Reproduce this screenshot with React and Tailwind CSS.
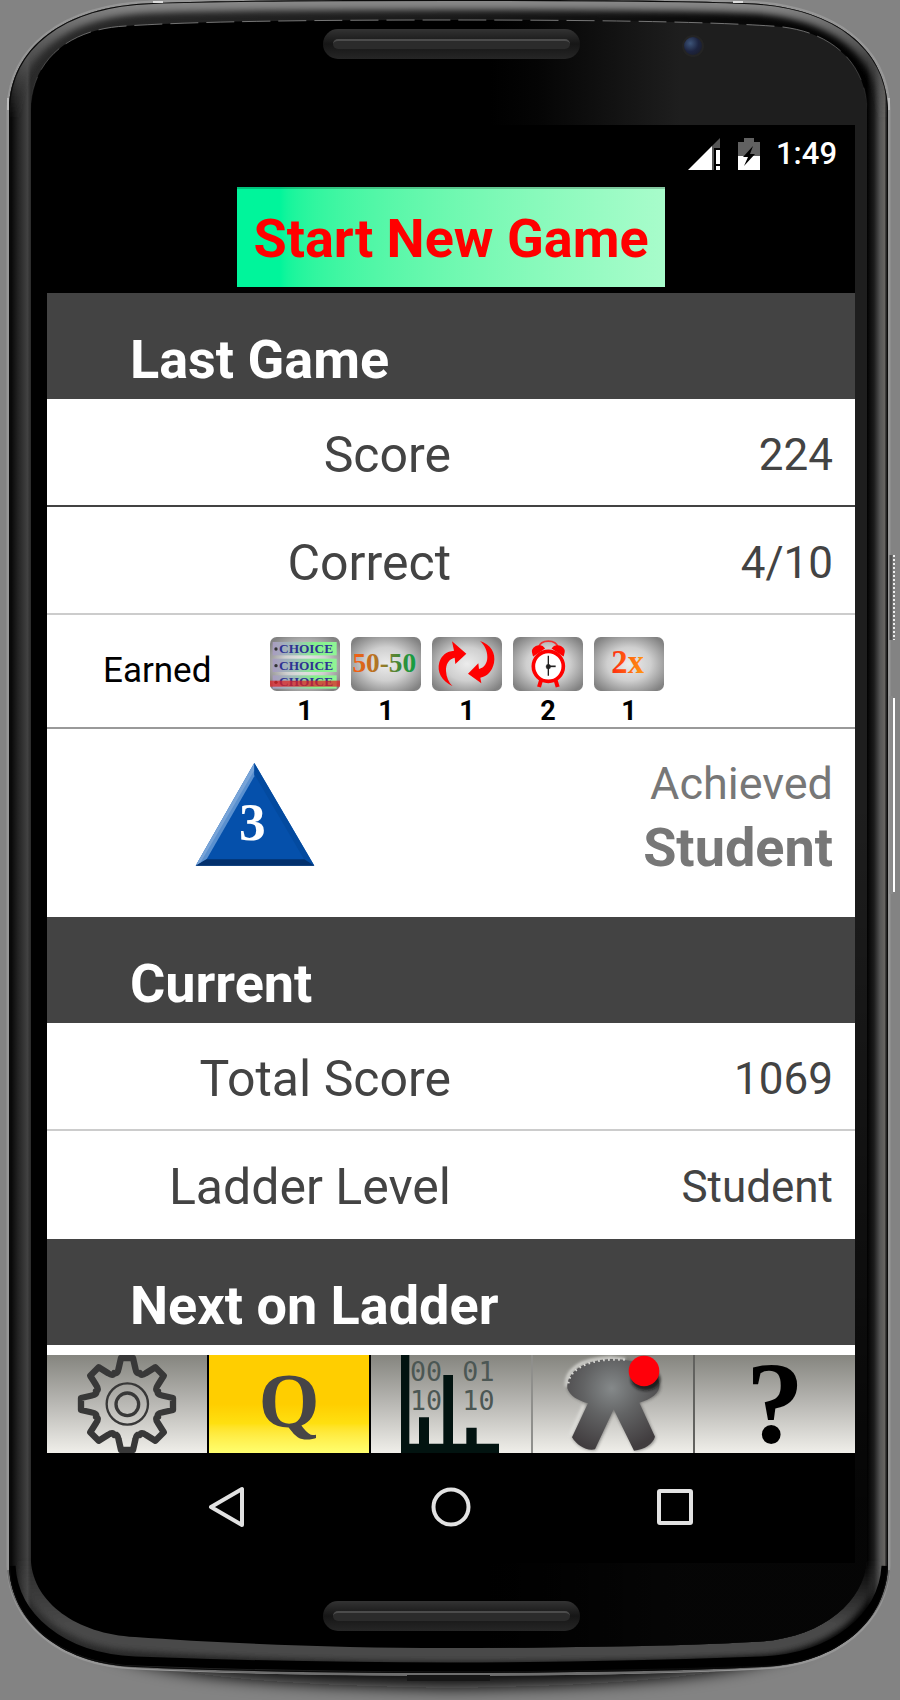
import React from "react";

const OUTER =
  "M9 108 C11 50 60 6 153 3 C230 0 330 0 448 0 C567 0 667 0 744 3 C837 6 886 50 888 108 V1566 C886 1620 840 1664 762 1667 C680 1671 560 1673 448 1673 C337 1673 217 1671 135 1667 C57 1664 11 1620 9 1566 Z";
const GLASS =
  "M31 104 C34 62 66 29 126 26 C200 21 330 20 448 20 C567 20 697 21 771 26 C831 29 863 62 867 104 V1562 C863 1602 822 1640 752 1642 C680 1646 560 1648 448 1648 C337 1648 217 1643 135 1637 C76 1634 34 1602 31 1562 Z";
const LOWER_RIM =
  "M11 1566 C14 1616 60 1658 135 1661 C217 1664 337 1667 448 1667 C560 1667 680 1664 762 1661 C836 1658 883 1616 886 1566";

function PhoneBody() {
  return (
    <svg
      className="absolute inset-0 h-full w-full"
      viewBox="0 0 900 1700"
      preserveAspectRatio="none"
      aria-hidden="true"
    >
      <defs>
        <linearGradient id="rim" gradientUnits="userSpaceOnUse" x1="9" y1="0" x2="888" y2="0">
          <stop offset="0" stopColor="#1c1c1c" />
          <stop offset="0.002" stopColor="#060606" />
          <stop offset="0.01" stopColor="#222" />
          <stop offset="0.021" stopColor="#424242" />
          <stop offset="0.025" stopColor="#2a2a2a" />
          <stop offset="0.5" stopColor="#1a1a1a" />
          <stop offset="0.976" stopColor="#000" />
          <stop offset="0.984" stopColor="#1c1c1c" />
          <stop offset="0.991" stopColor="#555" />
          <stop offset="0.996" stopColor="#666461" />
          <stop offset="0.998" stopColor="#242424" />
          <stop offset="1" stopColor="#242424" />
        </linearGradient>
        <linearGradient id="topFade" gradientUnits="userSpaceOnUse" x1="0" y1="0" x2="0" y2="120">
          <stop offset="0" stopColor="#8a8a8a" />
          <stop offset="0.4" stopColor="#5c5c5c" stopOpacity="0.9" />
          <stop offset="1" stopColor="#444" stopOpacity="0" />
        </linearGradient>
        <linearGradient id="bottomFade" gradientUnits="userSpaceOnUse" x1="0" y1="1560" x2="0" y2="1625">
          <stop offset="0" stopColor="#4a4a4a" stopOpacity="0" />
          <stop offset="1" stopColor="#4a4a4a" />
        </linearGradient>
        <linearGradient id="innerEdge" gradientUnits="userSpaceOnUse" x1="0" y1="20" x2="0" y2="110">
          <stop offset="0" stopColor="#777" />
          <stop offset="1" stopColor="#777" stopOpacity="0" />
        </linearGradient>
        <linearGradient id="sheen" gradientUnits="userSpaceOnUse" x1="490" y1="0" x2="680" y2="0">
          <stop offset="0" stopColor="#1e1e1e" stopOpacity="0" />
          <stop offset="0.25" stopColor="#1e1e1e" stopOpacity="0.15" />
          <stop offset="1" stopColor="#1e1e1e" />
        </linearGradient>
        <linearGradient id="sheenDim" gradientUnits="userSpaceOnUse" x1="0" y1="800" x2="0" y2="1500">
          <stop offset="0" stopColor="#000" stopOpacity="0" />
          <stop offset="1" stopColor="#000" stopOpacity="0.82" />
        </linearGradient>
        <filter id="soft" x="-5%" y="-5%" width="110%" height="110%">
          <feGaussianBlur stdDeviation="3" />
        </filter>
        <filter id="softer" x="-20%" y="-80%" width="140%" height="260%">
          <feGaussianBlur stdDeviation="8" />
        </filter>
        <clipPath id="body">
          <path d={OUTER} />
        </clipPath>
        <clipPath id="glass">
          <path d={GLASS} />
        </clipPath>
      </defs>

      <path
        d="M50 1610 C90 1668 200 1684 448 1688 C700 1684 810 1668 850 1610 Z"
        fill="#0c0c0c"
        filter="url(#softer)"
      />

      <path d={OUTER} fill="none" stroke="#969696" strokeWidth="5" />
      <path
        d="M9 1570 C14 1620 60 1662 135 1666 C217 1671 337 1674 448 1674 C560 1674 680 1671 762 1666 C836 1662 883 1620 888 1570"
        fill="none"
        stroke="#6e6e6e"
        strokeWidth="4"
      />
      <path d={OUTER} fill="url(#rim)" />
      <g clipPath="url(#body)">
        <path d={OUTER} fill="none" stroke="url(#topFade)" strokeWidth="20" filter="url(#soft)" />
        <path d={GLASS} fill="none" stroke="url(#bottomFade)" strokeWidth="28" filter="url(#soft)" />
        <path d={LOWER_RIM} fill="none" stroke="#000" strokeWidth="9" />
        <path d={OUTER} fill="none" stroke="#0a0a0a" strokeWidth="2" />
      </g>
      <path d={GLASS} fill="#000" />
      <g clipPath="url(#glass)">
        <rect x="490" y="20" width="380" height="1630" fill="url(#sheen)" />
        <rect x="490" y="800" width="380" height="850" fill="url(#sheenDim)" />
      </g>
      <path d={GLASS} fill="none" stroke="url(#innerEdge)" strokeWidth="1" strokeDasharray="28 8" />

      <path d="M153 2 h10 M733 2 h10" stroke="#ddd" strokeWidth="2" />
      <path d="M8 98 v12 M889 98 v12" stroke="#bbb" strokeWidth="2" />
      <rect x="407" y="1675" width="83" height="6" fill="#161616" />
      <g fill="none">
        <path d="M891 555 V640" stroke="#555" strokeWidth="3" />
        <path d="M894 555 V640" stroke="#eee" strokeWidth="2" strokeDasharray="2 2" />
        <path d="M891 696 V894" stroke="#8a8a8a" strokeWidth="3" />
        <path d="M894 698 V892" stroke="#fff" strokeWidth="2" />
      </g>
    </svg>
  );
}

function Speaker() {
  return (
    <div className="mx-auto h-[30px] w-[257px] rounded-full bg-linear-to-b from-[#333] via-[#161616] to-[#262626] p-[10px]">
      <div className="h-[10px] rounded-full border-t-2 border-[#4c4c4c] bg-[#2b2b2b]" />
    </div>
  );
}

function StatusBar() {
  return (
    <div className="flex h-[62px] items-center justify-end pr-[18px] pb-[4px] text-white">
      <svg className="h-[32px] w-[34px]" viewBox="0 0 34 32" aria-label="Signal">
        <path d="M24 8 L32 0 V10 H26 V32 H24 Z" fill="#555" />
        <path d="M0 32 L24 8 V32 Z" fill="#fff" />
        <path d="M28 12 h4 v14 h-4 z M28 28 h4 v4 h-4 z" fill="#fff" />
      </svg>
      <svg className="ml-4 h-[32px] w-[22px]" viewBox="0 0 22 32" aria-label="Battery charging">
        <path d="M0 4 H6 V0 H16 V4 H22 V18 H0 Z" fill="#616161" />
        <path d="M0 18 H22 V32 H0 Z" fill="#fff" />
        <path d="M15 8 L5 19 H10 L6 28 L17 16 H12 Z" fill="#000" />
      </svg>
      <time className="ml-4 text-[31px] leading-[32px] font-medium">1:49</time>
    </div>
  );
}

function SectionTitle({ children }) {
  return (
    <h2 className="bg-[#434343] pt-[37px] pr-4 pb-[9px] pl-[83px] text-[54px] leading-[60px] font-bold text-white">
      {children}
    </h2>
  );
}

function Row({ label, value, line = "border-[#ccc]" }) {
  return (
    <div className={"grid grid-cols-2 border-b-2 pt-[29px] pb-[23px] text-[#434343] " + line}>
      <dt className="text-right text-[50px] leading-[54px]">{label}</dt>
      <dd className="pr-[22px] text-right text-[44px] leading-[54px]">{value}</dd>
    </div>
  );
}

function Chip({ id, children }) {
  return (
    <svg className="h-[54px] w-[70px]" viewBox="0 0 210 162" aria-hidden="true">
      <defs>
        <radialGradient id={id + "-bg"} cx="0.5" cy="0.5" r="0.62">
          <stop offset="0" stopColor="#ececec" />
          <stop offset="0.5" stopColor="#cfcfcf" />
          <stop offset="1" stopColor="#828282" />
        </radialGradient>
      </defs>
      <rect width="210" height="162" rx="20" fill={"url(#" + id + "-bg)"} />
      {children}
    </svg>
  );
}

function ChoiceChip() {
  return (
    <Chip id="choice">
      <defs>
        <linearGradient id="choice-bar" x1="0" y1="0" x2="1" y2="0">
          <stop offset="0" stopColor="#a89cc0" />
          <stop offset="0.35" stopColor="#9fc0b8" />
          <stop offset="0.65" stopColor="#85f08c" />
          <stop offset="1" stopColor="#90f596" />
        </linearGradient>
      </defs>
      {[15, 65, 115].map((y) => (
        <g key={y}>
          <rect x="8" y={y} width="192" height="40" fill="url(#choice-bar)" />
          <circle cx="18" cy={y + 21} r="5" fill="#333" />
          <text x="27" y={y + 33} fontSize="40" fontWeight="700" fill="#2e3192" fontFamily="Liberation Serif, serif">
            CHOICE
          </text>
        </g>
      ))}
      <rect x="0" y="131" width="210" height="18" fill="#e02020" opacity="0.72" />
    </Chip>
  );
}

function FiftyChip() {
  return (
    <Chip id="fifty">
      <defs>
        <linearGradient id="fifty-ink" x1="0" y1="0" x2="1" y2="0">
          <stop offset="0" stopColor="#ff5a10" />
          <stop offset="0.45" stopColor="#a07a28" />
          <stop offset="0.75" stopColor="#3a8a38" />
          <stop offset="1" stopColor="#10a040" />
        </linearGradient>
      </defs>
      <text x="100" y="106" textAnchor="middle" fontSize="82" fontWeight="700" fill="url(#fifty-ink)" fontFamily="Liberation Serif, serif">
        50-50
      </text>
    </Chip>
  );
}

function SwapChip() {
  return (
    <Chip id="swap">
      <g fill="#f00">
        <path d="M62 148 C28 132 14 104 22 76 C29 54 44 43 66 41 L60 13 L103 50 L70 81 L68 62 C50 66 41 82 42 102 C43 121 50 136 62 148 Z" />
        <path d="M144 12 C176 22 192 48 186 78 C180 104 166 118 145 122 L148 139 L108 110 L139 79 L141 96 C157 92 166 78 166 60 C166 40 157 24 144 12 Z" />
      </g>
    </Chip>
  );
}

function ClockChip() {
  return (
    <Chip id="clock">
      <g stroke="#f00" fill="none">
        <path d="M76 32 C84 6 128 6 136 32" stroke="#f03030" strokeWidth="5" />
        <path d="M62 54 C52 30 82 20 92 34 Z M150 54 C160 30 130 20 120 34 Z" fill="#f00" strokeWidth="6" />
        <path d="M84 130 L78 150 M128 130 L134 150" strokeWidth="12" />
        <circle cx="106" cy="88" r="45" fill="#fff" strokeWidth="11" />
      </g>
      <g stroke="#222" fill="#222">
        <path d="M106 56 V116" strokeWidth="4" />
        <path d="M106 88 H128" strokeWidth="5" />
        <circle cx="106" cy="89" r="7" />
      </g>
    </Chip>
  );
}

function DoubleChip() {
  return (
    <Chip id="double">
      <defs>
        <linearGradient id="double-ink" x1="0" y1="0" x2="1" y2="0">
          <stop offset="0" stopColor="#ff2a10" />
          <stop offset="1" stopColor="#ff9a10" />
        </linearGradient>
      </defs>
      <text x="101" y="107" textAnchor="middle" fontSize="98" fontWeight="700" fill="url(#double-ink)" fontFamily="Liberation Serif, serif">
        2x
      </text>
    </Chip>
  );
}

const EARNED = [
  { name: "Choice", Icon: ChoiceChip, count: 1 },
  { name: "Fifty-fifty", Icon: FiftyChip, count: 1 },
  { name: "Swap", Icon: SwapChip, count: 1 },
  { name: "Extra time", Icon: ClockChip, count: 2 },
  { name: "Double", Icon: DoubleChip, count: 1 },
];

function EarnedRow() {
  return (
    <div className="flex border-b-2 border-[#999] pt-[22px] pb-[2px]">
      <h3 className="w-[223px] pl-[56px] text-[35px] leading-[68px] text-black">Earned</h3>
      <ul className="flex gap-[11px]">
        {EARNED.map(({ name, Icon, count }) => (
          <li key={name} className="flex flex-col items-center">
            <Icon />
            <span className="pt-[6px] text-[27px] leading-[28px] font-bold text-black">{count}</span>
          </li>
        ))}
      </ul>
    </div>
  );
}

function RankBadge() {
  return (
    <svg className="h-[104px] w-[120px]" viewBox="0 0 360 312" role="img" aria-label="Level 3">
      <path d="M178 0 L358 308 H2 Z" fill="#0550ab" />
      <path d="M178 0 L2 308 L34 290 L178 40 Z" fill="#5a90cf" />
      <path d="M178 0 L2 308 L16 299 L178 22 Z" fill="#78a4d8" />
      <path d="M178 0 L358 308 L328 290 L178 34 Z" fill="#034a9f" />
      <path d="M2 308 L34 289 H328 L358 308 Z" fill="#03306d" />
      <text x="172" y="232" textAnchor="middle" fontSize="160" fontWeight="700" fill="#fff" fontFamily="Liberation Serif, serif">
        3
      </text>
    </svg>
  );
}

function AchievedRow() {
  return (
    <div className="flex items-start justify-between pt-[34px] pr-[22px] pb-[38px] pl-[148px] text-[#777]">
      <RankBadge />
      <p className="flex flex-col gap-[12px] pt-[1px] text-right">
        <span className="text-[45px] leading-[40px]">Achieved</span>
        <strong className="text-[54px] leading-[63px] font-bold">Student</strong>
      </p>
    </div>
  );
}

function gearPath() {
  const point = (x, y, turn) => {
    const a = (turn * Math.PI) / 4;
    const px = 261 + 3 * (x * Math.cos(a) - y * Math.sin(a));
    const py = 192 + 3 * (x * Math.sin(a) + y * Math.cos(a));
    return px.toFixed(1) + " " + py.toFixed(1);
  };
  let d = "";
  for (let i = 0; i < 8; i++) {
    d += (i === 0 ? "M" : "L") + point(-6, -46, i);
    d += " L" + point(6, -46, i);
    d += " L" + point(8.5, -35, i);
    d += " Q" + point(9.5, -29.5, i) + " " + point(12.8, -31, i);
    d += " Q" + point(-9.5, -29.5, i + 1) + " " + point(-8.5, -35, i + 1);
  }
  return d + " Z";
}

function GearIcon() {
  return (
    <svg className="h-[98px] w-full" viewBox="21 45 480 294" aria-hidden="true">
      <g fill="none" stroke="#383838">
        <path d={gearPath()} strokeWidth="19" strokeLinejoin="round" />
        <circle cx="262" cy="192" r="62" strokeWidth="7" />
        <circle cx="262" cy="193" r="34" strokeWidth="10" />
      </g>
    </svg>
  );
}

function LetterIcon({ letter, size, y, color }) {
  return (
    <svg className="h-[98px] w-full overflow-visible" viewBox="0 0 160 98" aria-hidden="true">
      <text x="80" y={y} textAnchor="middle" fontSize={size} fontWeight="700" fill={color} fontFamily="Liberation Serif, serif">
        {letter}
      </text>
    </svg>
  );
}

function StatsIcon() {
  return (
    <svg className="h-[98px] w-full" viewBox="-27 45 480 294" aria-hidden="true">
      <g fill="#4c5754" fontSize="80" fontFamily="DejaVu Sans Mono, monospace">
        <text x="90" y="122">00</text>
        <text x="247" y="122">01</text>
        <text x="90" y="210">10</text>
        <text x="247" y="210">10</text>
      </g>
      <path d="M63 45 H88 V311 H117 V232 H147 V311 H190 V105 H219 V311 H259 V263 H290 V311 H357 V339 H63 Z" fill="#021310" />
    </svg>
  );
}

function BeltIcon() {
  return (
    <svg className="h-[98px] w-full" viewBox="459 45 480 294" aria-hidden="true">
      <defs>
        <radialGradient id="belt-cloth" gradientUnits="userSpaceOnUse" cx="695" cy="145" r="190">
          <stop offset="0" stopColor="#85898a" />
          <stop offset="0.45" stopColor="#626364" />
          <stop offset="1" stopColor="#413d3f" />
        </radialGradient>
        <filter id="belt-soft" x="-10%" y="-10%" width="120%" height="120%">
          <feGaussianBlur stdDeviation="5" />
        </filter>
      </defs>
      <path
        d="M562 145 C560 95 610 62 690 57 C770 55 838 90 842 140 C842 164 812 180 780 188 L827 292 C825 315 795 330 766 334 L702 212 L648 330 C622 336 590 318 576 292 L622 190 C594 182 570 168 562 145 Z"
        fill="#222"
        opacity="0.45"
        filter="url(#belt-soft)"
      />
      <path d="M560 140 C556 90 600 58 690 54 L735 58 M612 196 L572 288" fill="none" stroke="#e4e4e0" strokeWidth="10" opacity="0.85" filter="url(#belt-soft)" />
      <path
        d="M562 145 C560 95 610 62 690 57 C770 55 838 90 838 135 C840 160 812 178 778 188 L825 290 C818 312 795 328 762 332 L701 208 L645 328 C620 334 590 316 576 292 L624 190 C594 182 570 168 562 145 Z"
        fill="url(#belt-cloth)"
      />
      <path d="M565 130 C568 92 615 62 690 59 L735 59" fill="none" stroke="#d8d8d4" strokeWidth="7" strokeDasharray="5 10" />
      <ellipse cx="797" cy="118" rx="44" ry="34" fill="#111" opacity="0.75" filter="url(#belt-soft)" />
      <circle cx="792" cy="93" r="46" fill="#ff000a" />
    </svg>
  );
}

const TABS = [
  { name: "Settings", icon: <GearIcon /> },
  { name: "Quiz", icon: <LetterIcon letter="Q" size={78} y={72} color="#474547" />, active: true },
  { name: "Statistics", icon: <StatsIcon /> },
  { name: "Ladder", icon: <BeltIcon /> },
  { name: "Help", icon: <LetterIcon letter="?" size={116} y={87} color="#000" /> },
];

const TAB_EDGES = ["bg-black", "bg-black", "bg-[#8f8f8c]", "bg-[#62625f]"];

function TabBar() {
  return (
    <nav className="mt-[10px] flex" aria-label="Sections">
      {TABS.map((tab, i) => (
        <React.Fragment key={tab.name}>
          <button
            type="button"
            aria-label={tab.name}
            aria-current={tab.active ? "page" : undefined}
            className={
              "min-w-0 flex-1 " +
              (tab.active
                ? "bg-linear-to-b from-[#ffce00] from-50% via-[#ffe010] via-70% to-[#ffff6e]"
                : "bg-linear-to-b from-[#85857f] via-[#b9b8b4] to-[#f0efea]")
            }
          >
            {tab.icon}
          </button>
          {i < TAB_EDGES.length && <span className={"w-[2px] " + TAB_EDGES[i]} />}
        </React.Fragment>
      ))}
    </nav>
  );
}

function SystemNav() {
  return (
    <nav className="flex h-[110px] items-center justify-center gap-[184px] bg-black pb-[2px]" aria-label="System">
      <button type="button" aria-label="Back">
        <svg className="h-[42px] w-[40px]" viewBox="0 0 40 42">
          <path d="M35 3 V39 L4 21 Z" fill="none" stroke="#e2e2e2" strokeWidth="4" strokeLinejoin="round" />
        </svg>
      </button>
      <button type="button" aria-label="Home">
        <svg className="h-[42px] w-[40px]" viewBox="0 0 40 42">
          <circle cx="20" cy="21" r="17.5" fill="none" stroke="#e2e2e2" strokeWidth="4" />
        </svg>
      </button>
      <button type="button" aria-label="Recent apps">
        <svg className="h-[42px] w-[40px]" viewBox="0 0 40 42">
          <rect x="4" y="5" width="32" height="32" rx="1" fill="none" stroke="#e2e2e2" strokeWidth="4" />
        </svg>
      </button>
    </nav>
  );
}

export default function App() {
  return (
    <div className="relative isolate overflow-hidden bg-[#838383] pr-[45px] pl-[47px] font-[Roboto,sans-serif]">
      <div className="absolute inset-0 -z-10">
        <PhoneBody />
      </div>

      <div className="relative h-[125px] pt-[29px]">
        <Speaker />
        <span className="absolute top-[35px] right-[151px] size-[22px] rounded-full border-2 border-[#242424] bg-radial-[at_35%_35%] from-[#3d5478] via-[#1d2440] to-[#1a1b22]" />
      </div>

      <main className="bg-black">
        <StatusBar />
        <div className="flex justify-center pb-[6px]">
          <button
            type="button"
            className="h-[100px] border-t-2 border-black/20 bg-linear-to-r from-[#00f59b] from-10% to-[#a8fccb] px-[16px] pt-[2px] text-[54px] leading-[60px] font-bold text-[#f00]"
          >
            Start New Game
          </button>
        </div>

        <div className="bg-white">
          <section>
            <SectionTitle>Last Game</SectionTitle>
            <dl>
              <Row label="Score" value="224" line="border-[#434343]" />
              <Row label="Correct" value="4/10" />
            </dl>
            <EarnedRow />
            <AchievedRow />
          </section>
          <section>
            <SectionTitle>Current</SectionTitle>
            <dl>
              <Row label="Total Score" value="1069" />
              <Row label="Ladder Level" value="Student" line="border-white" />
            </dl>
          </section>
          <section>
            <SectionTitle>Next on Ladder</SectionTitle>
          </section>
          <TabBar />
        </div>
        <SystemNav />
      </main>

      <div className="h-[137px] pt-[38px]">
        <Speaker />
      </div>
    </div>
  );
}
